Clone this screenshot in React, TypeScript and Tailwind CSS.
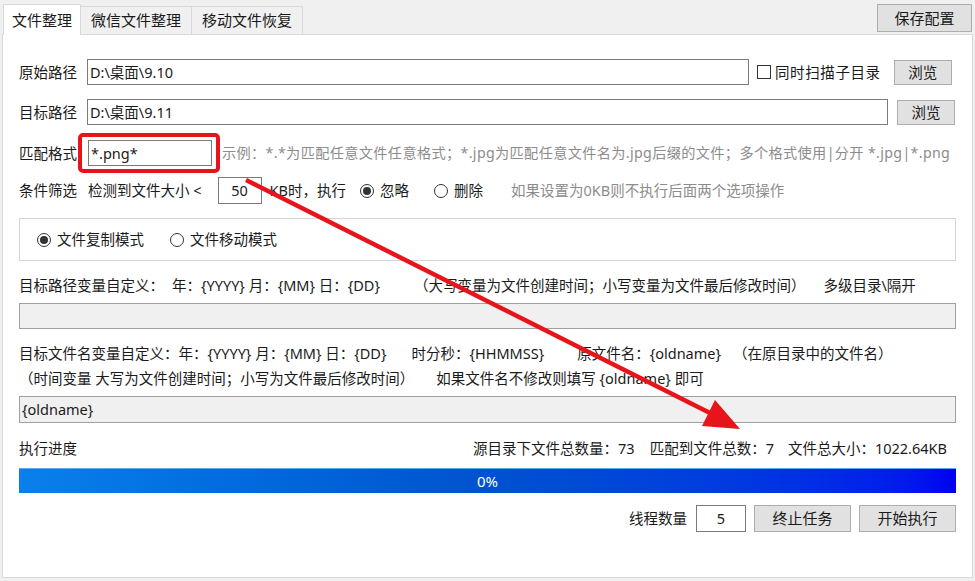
import React from 'react';

function Radio({ checked, label }: { checked?: boolean; label: string }) {
  return (
    <span className="flex items-center gap-[6px]">
      <span className="w-[14px] h-[14px] rounded-full border border-[#333] bg-white flex items-center justify-center">
        {checked && <span className="w-[8px] h-[8px] rounded-full bg-[#333]" />}
      </span>
      <span>{label}</span>
    </span>
  );
}

function Btn({ children, className = '' }: { children: React.ReactNode; className?: string }) {
  return (
    <div className={`flex items-center justify-center bg-[#e1e1e1] border border-[#adadad] ${className}`}>
      {children}
    </div>
  );
}

export default function App() {
  return (
    <div className="relative w-[975px] h-[581px] bg-[#f0f0f0] overflow-hidden text-[14.5px] text-[#1a1a1a] font-['Noto_Sans','Noto_Sans_CJK_SC',sans-serif] leading-none">
      {/* tab strip */}
      <div className="h-[34px] flex justify-between">
        <div className="flex items-end pl-[3px]">
          <div className="h-[31px] px-[8px] flex items-center bg-white border border-b-0 border-[#d9d9d9] text-[15px] z-10 -mb-px">文件整理</div>
          <div className="h-[28px] px-[10px] flex items-center border border-b-0 border-l-0 border-[#d9d9d9] bg-[#f0f0f0] text-[15px]">微信文件整理</div>
          <div className="h-[28px] px-[10px] flex items-center border border-b-0 border-l-0 border-[#d9d9d9] bg-[#f0f0f0] text-[15px]">移动文件恢复</div>
        </div>
        <Btn className="mt-[4px] mr-[3px] w-[95px] h-[28px] text-[15px]">保存配置</Btn>
      </div>

      {/* panel */}
      <div className="ml-[2px] w-[971px] h-[544px] bg-white border border-[#d9d9d9] pl-[16px] flex flex-col">
        {/* row 1 */}
        <div className="mt-[24px] h-[26px] flex items-center">
          <span className="w-[68px]">原始路径</span>
          <div className="w-[662px] h-[26px] border border-[#7a7a7a] flex items-center px-[2px]">D:\桌面\9.10</div>
          <span className="ml-[8px] w-[14px] h-[14px] border border-[#333]" />
          <span className="ml-[4px] tracking-[0.6px]">同时扫描子目录</span>
          <Btn className="ml-[13px] w-[58px] h-[25px]">浏览</Btn>
        </div>
        {/* row 2 */}
        <div className="mt-[14px] h-[26px] flex items-center">
          <span className="w-[68px]">目标路径</span>
          <div className="w-[801px] h-[26px] border border-[#7a7a7a] flex items-center px-[2px]">D:\桌面\9.11</div>
          <Btn className="ml-[9px] w-[58px] h-[25px]">浏览</Btn>
        </div>
        {/* row 3 */}
        <div className="mt-[15px] h-[26px] flex items-center">
          <span className="w-[69px]">匹配格式</span>
          <div className="w-[124px] h-[26px] border border-[#7a7a7a] flex items-center px-[2px]">*.png*</div>
          <span className="ml-[10px] text-[#8c8c8c] text-[14.2px] tracking-[0.35px] whitespace-nowrap">示例：*.*为匹配任意文件任意格式；*.jpg为匹配任意文件名为.jpg后缀的文件；多个格式使用|分开 *.jpg|*.png</span>
        </div>
        {/* row 4 */}
        <div className="mt-[11px] h-[27px] flex items-center whitespace-nowrap">
          <span className="w-[69px]">条件筛选</span>
          <span>检测到文件大小 &lt;</span>
          <div className="ml-[16px] w-[44px] h-[27px] border border-[#7a7a7a] flex items-center justify-center">50</div>
          <span className="ml-[8px]">KB时，执行</span>
          <span className="ml-[14px]"><Radio checked label="忽略" /></span>
          <span className="ml-[25px]"><Radio label="删除" /></span>
          <span className="ml-[28px] text-[#8c8c8c]">如果设置为0KB则不执行后面两个选项操作</span>
        </div>
        {/* group box */}
        <div className="mt-[14px] w-[937px] h-[43px] border border-[#d5d5d5] flex items-center pl-[17px] gap-[26px]">
          <Radio checked label="文件复制模式" />
          <Radio label="文件移动模式" />
        </div>
        {/* target path vars */}
        <div className="mt-[14px] h-[20px] flex items-center whitespace-nowrap">
          <span>目标路径变量自定义：</span>
          <span className="ml-[8px]">年：{'{YYYY}'} 月：{'{MM}'} 日：{'{DD}'}</span>
          <span className="ml-[34px]">（大写变量为文件创建时间；小写变量为文件最后修改时间）</span>
          <span className="ml-[18px]">多级目录\隔开</span>
        </div>
        <div className="mt-[8px] w-[937px] h-[26px] bg-[#f0f0f0] border border-[#a0a0a0]" />
        {/* target filename vars */}
        <div className="mt-[14px] h-[20px] flex items-center whitespace-nowrap">
          <span>目标文件名变量自定义：年：{'{YYYY}'} 月：{'{MM}'} 日：{'{DD}'}</span>
          <span className="ml-[25px]">时分秒：{'{HHMMSS}'}</span>
          <span className="ml-[33px]">原文件名：{'{oldname}'}</span>
          <span className="ml-[12px]">（在原目录中的文件名）</span>
        </div>
        <div className="mt-[5px] h-[20px] flex items-center whitespace-nowrap">
          <span>（时间变量 大写为文件创建时间；小写为文件最后修改时间）</span>
          <span className="ml-[22px]">如果文件名不修改则填写 {'{oldname}'} 即可</span>
        </div>
        <div className="mt-[8px] w-[937px] h-[27px] bg-[#f0f0f0] border border-[#a0a0a0] flex items-center px-[2px]">{'{oldname}'}</div>
        {/* progress */}
        <div className="mt-[15px] w-[928px] h-[20px] flex items-center justify-between whitespace-nowrap">
          <span>执行进度</span>
          <span className="flex">
            <span>源目录下文件总数量：73</span>
            <span className="ml-[15px]">匹配到文件总数：7</span>
            <span className="ml-[14px]">文件总大小：1022.64KB</span>
          </span>
        </div>
        <div className="mt-[10px] w-[937px] h-[25px] bg-linear-to-r from-[#0a80ec] via-[#0052cf] to-[#0000f0] border-t border-[#5aa8f0] flex items-center justify-center text-white text-[15px]">0%</div>
        {/* bottom */}
        <div className="mt-[12px] w-[937px] h-[27px] flex items-center justify-end">
          <span>线程数量</span>
          <div className="ml-[9px] w-[50px] h-[27px] border border-[#7a7a7a] flex items-center justify-center">5</div>
          <Btn className="ml-[8px] w-[97px] h-[27px] text-[15px]">终止任务</Btn>
          <Btn className="ml-[8px] w-[97px] h-[27px] text-[15px]">开始执行</Btn>
        </div>
      </div>

      {/* annotation overlay */}
      <svg className="absolute inset-0 pointer-events-none" width="975" height="581">
        <rect x="80" y="135" width="138" height="36" rx="3" fill="none" stroke="#e8141b" strokeWidth="4" />
        <line x1="246" y1="180" x2="712" y2="414" stroke="#e8141b" strokeWidth="4.5" />
        <polygon points="740,429 702,426 715,400" fill="#e8141b" />
      </svg>
    </div>
  );
}
